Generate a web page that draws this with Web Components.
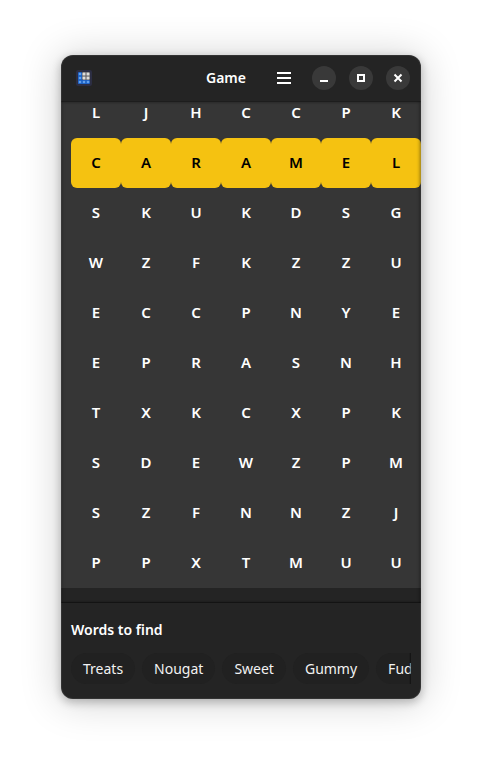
<!DOCTYPE html>
<html lang="en">
<head>
<meta charset="utf-8">
<title>Game</title>
<style>
  body { margin: 0; height: 100vh; display: flex; box-sizing: border-box; padding: 55px 61px 67px; background: #fff; font-family: "Noto Sans", "Open Sans", sans-serif; font-size: 14px; line-height: 20px; }
</style>
</head>
<body>
<game-window>
  <title-bar slot="header">Game</title-bar>
  <letter-grid rows="LJHCCPK CARAMEL SKUKDSG WZFKZZU ECCPNYE EPRASNH TXKCXPK SDEWZPM SZFNNZJ PPXTMUU" found="CARAMEL"></letter-grid>
  <word-list slot="footer" heading="Words to find">
    <word-chip>Treats</word-chip>
    <word-chip>Nougat</word-chip>
    <word-chip>Sweet</word-chip>
    <word-chip>Gummy</word-chip>
    <word-chip>Fudge</word-chip>
  </word-list>
</game-window>
<script>
class BaseElement extends HTMLElement {
  constructor() {
    super();
    this.attachShadow({ mode: 'open' });
  }
  connectedCallback() { this.shadowRoot.innerHTML = this.render(); }
}

customElements.define('game-window', class extends BaseElement {
  render() {
    return `<style>
      :host { flex: 1; min-width: 0; display: flex; flex-direction: column; position: relative; overflow: hidden; border-radius: 12px; background: #242424; color: #fff;
        box-shadow: 0 3px 9px 1px rgba(0,0,0,.22), 0 2px 38px 3px rgba(0,0,0,.17); }
      :host::after { content: ""; position: absolute; inset: 0; border-radius: inherit; box-shadow: inset 0 0 0 1px rgba(255,255,255,.07); pointer-events: none; }
      main { flex: 1; min-height: 0; display: flex; flex-direction: column; position: relative; }
      main::after { content: ""; position: absolute; inset: 0; pointer-events: none;
        box-shadow: inset 0 1px rgba(0,0,0,.25), inset 0 2px 2px rgba(0,0,0,.15), inset 0 -1px 1px rgba(0,0,0,.4), inset -2px 0 3px rgba(0,0,0,.25), inset 2px 0 3px rgba(0,0,0,.12); }
    </style>
    <slot name="header"></slot><main><slot></slot></main><slot name="footer"></slot>`;
  }
});

customElements.define('title-bar', class extends BaseElement {
  render() {
    return `<style>
      :host { flex: none; display: flex; align-items: center; height: 46px; padding: 0 11px 0 15px; font-weight: 600; }
      .app, .icon { display: block; }
      h1 { flex: 1; margin: 0 26px 0 0; font: inherit; text-align: right; }
      nav { display: flex; align-items: center; gap: 13px; }
      button { width: 24px; height: 24px; padding: 4px; border: 0; border-radius: 50%; background: #393939; color: #fff; }
      .menu { background: none; margin-right: 3px; }
      .icon { fill: none; stroke: currentColor; stroke-width: 2; }
    </style>
    <svg class="app" width="16" height="16" viewBox="0 0 16 16" aria-hidden="true">
      <rect width="16" height="16" rx="2" fill="#2c2e43"/>
      <g fill="#1c61c4"><rect x="2" y="2" width="4" height="12" rx="1"/><rect x="2" y="10" width="12" height="4" rx="1"/></g>
      <rect x="6" y="2" width="8" height="8" rx="1" fill="#77767b"/>
      <g fill="#62a0ea"><circle cx="4" cy="4" r="1.3"/><circle cx="4" cy="8" r="1.3"/><circle cx="4" cy="12" r="1.3"/><circle cx="8" cy="12" r="1.3"/><circle cx="12" cy="12" r="1.3"/></g>
      <g fill="#deddda"><circle cx="8" cy="4" r="1.5"/><circle cx="12" cy="4" r="1.5"/><circle cx="8" cy="8" r="1.5"/><circle cx="12" cy="8" r="1.5"/></g>
    </svg>
    <h1><slot></slot></h1>
    <nav>
      <button class="menu" aria-label="Menu"><svg class="icon" width="16" height="16" viewBox="0 0 16 16"><path d="M1 3H15M1 8H15M1 13H15"/></svg></button>
      <button aria-label="Minimize"><svg class="icon" width="16" height="16" viewBox="0 0 16 16"><path d="M4 11H12"/></svg></button>
      <button aria-label="Maximize"><svg class="icon" width="16" height="16" viewBox="0 0 16 16"><path d="M5 5H11V11H5Z"/></svg></button>
      <button aria-label="Close"><svg class="icon" width="16" height="16" viewBox="0 0 16 16"><path d="M4.5 4.5L11.5 11.5M11.5 4.5L4.5 11.5"/></svg></button>
    </nav>`;
  }
});

customElements.define('letter-grid', class extends BaseElement {
  render() {
    const found = this.getAttribute('found');
    const cells = this.getAttribute('rows').split(' ').map(row =>
      [...row].map(letter => `<span${row === found ? ' class="found"' : ''}>${letter}</span>`).join('')).join('');
    return `<style>
      :host { flex: 1; min-height: 0; display: flex; flex-direction: column; justify-content: flex-end; overflow: hidden; padding-bottom: 15px; }
      div { display: grid; grid-template-columns: repeat(7, 1fr); grid-auto-rows: 50px; padding-left: 10px; background: #363636; font-size: 15px; font-weight: 600; }
      span { display: grid; place-items: center; padding-bottom: 2px; box-sizing: border-box; border-radius: 6px; }
      .found { background: #f5c211; color: #000; }
    </style><div>${cells}</div>`;
  }
});

customElements.define('word-list', class extends BaseElement {
  render() {
    return `<style>
      :host { flex: none; display: block; padding: 17px 10px 15px; }
      h2 { margin: 0 0 13px; font: inherit; font-weight: 600; }
      div { display: flex; gap: 7px; overflow: hidden; position: relative; }
      div::after { content: ""; position: absolute; inset: 0 0 0 auto; width: 2px; background: linear-gradient(90deg, transparent, rgba(0,0,0,.5)); }
    </style><h2>${this.getAttribute('heading')}</h2><div><slot></slot></div>`;
  }
});

customElements.define('word-chip', class extends BaseElement {
  render() {
    return `<style>
      :host { flex: none; padding: 6px 12px 5px; border-radius: 16px; background: #212121; color: #f2f2f2; }
    </style><slot></slot>`;
  }
});
</script>
</body>
</html>
